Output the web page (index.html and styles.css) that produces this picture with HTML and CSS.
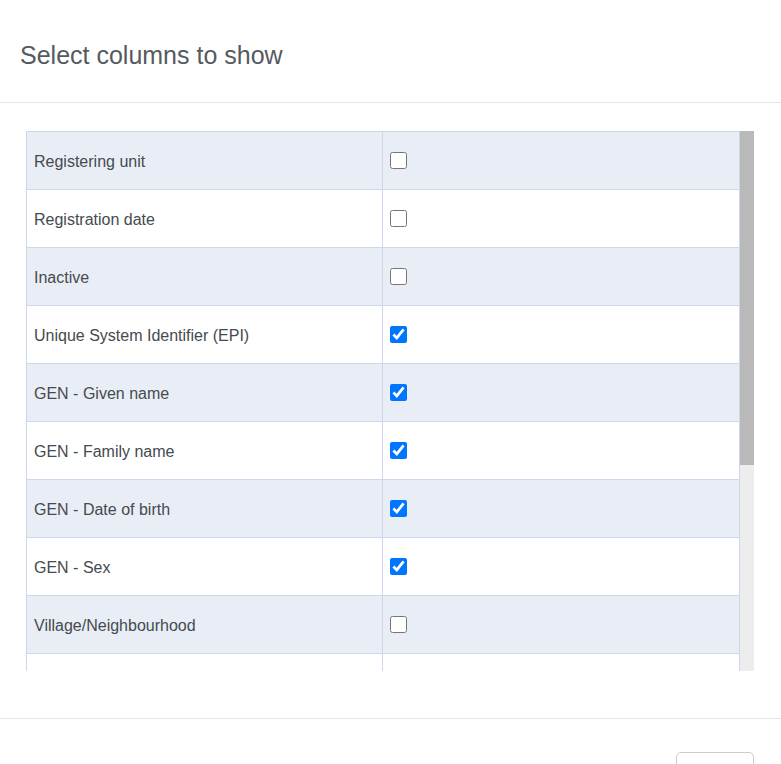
FILE: index.html
```html
<!DOCTYPE html>
<html lang="en">
<head>
<meta charset="utf-8">
<title>Select columns to show</title>
<link rel="stylesheet" href="styles.css">
</head>
<body>
<div class="modal">
  <div class="modal-header">
    <h2 class="modal-title">Select columns to show</h2>
  </div>
  <div class="modal-body">
    <div class="scroll-area">
      <div class="scroll-content">
        <table class="column-table">
          <tbody>
            <tr><td class="name">Registering unit</td><td class="check"><input type="checkbox"></td></tr>
            <tr><td class="name">Registration date</td><td class="check"><input type="checkbox"></td></tr>
            <tr><td class="name">Inactive</td><td class="check"><input type="checkbox"></td></tr>
            <tr><td class="name">Unique System Identifier (EPI)</td><td class="check"><input type="checkbox" checked></td></tr>
            <tr><td class="name">GEN - Given name</td><td class="check"><input type="checkbox" checked></td></tr>
            <tr><td class="name">GEN - Family name</td><td class="check"><input type="checkbox" checked></td></tr>
            <tr><td class="name">GEN - Date of birth</td><td class="check"><input type="checkbox" checked></td></tr>
            <tr><td class="name">GEN - Sex</td><td class="check"><input type="checkbox" checked></td></tr>
            <tr><td class="name">Village/Neighbourhood</td><td class="check"><input type="checkbox"></td></tr>
            <tr><td class="name">Phone number</td><td class="check"><input type="checkbox"></td></tr>
            <tr><td class="name">Address</td><td class="check"><input type="checkbox"></td></tr>
            <tr><td class="name">Mother's name</td><td class="check"><input type="checkbox"></td></tr>
            <tr><td class="name">Father's name</td><td class="check"><input type="checkbox"></td></tr>
            <tr><td class="name">Health facility</td><td class="check"><input type="checkbox"></td></tr>
            <tr><td class="name">Enrollment date</td><td class="check"><input type="checkbox"></td></tr>
          </tbody>
        </table>
      </div>
      <div class="scrollbar"><div class="scrollbar-thumb"></div></div>
    </div>
  </div>
  <div class="modal-footer">
    <button class="btn" type="button">Close</button>
  </div>
</div>
</body>
</html>
```

FILE: styles.css
```css
html, body {
  margin: 0;
  padding: 0;
  background: #ffffff;
  font-family: "Liberation Sans", Arial, sans-serif;
}

.modal {
  width: 781px;
  height: 764px;
  overflow: hidden;
}

.modal-header {
  height: 103px;
  padding: 9px 20px 0;
  display: flex;
  align-items: center;
  border-bottom: 1px solid #e5e5e5;
  box-sizing: border-box;
}

.modal-title {
  margin: 0;
  font-size: 25px;
  font-weight: 400;
  color: #555a5f;
}

.modal-body {
  padding: 28px 27px 47px 26px;
}

/* list viewport with its own scrollbar rail */
.scroll-area {
  height: 540px;
  display: flex;
}

.scroll-content {
  flex: 1;
  overflow: hidden;
}

.scrollbar {
  width: 14px;
  background: #ededed;
  flex-shrink: 0;
}

.scrollbar-thumb {
  height: 334px;
  background: #b9b9b9;
}

.column-table {
  width: 100%;
  border-collapse: collapse;
  font-size: 16px;
  color: #464a4e;
}

.column-table td {
  height: 58px;
  border: 1px solid #ccd8ea;
  padding: 0 7px;
  box-sizing: border-box;
}

.column-table td.name {
  width: 356px;
  padding-top: 2px;
}

.column-table tr:nth-child(odd) td {
  background: #e9eef6;
}

.column-table input[type="checkbox"] {
  width: 17px;
  height: 17px;
  margin: 0;
  display: block;
}

.modal-footer {
  border-top: 1px solid #e5e5e5;
  padding: 33px 27px 0;
  display: flex;
  justify-content: flex-end;
  align-items: flex-start;
}

.btn {
  width: 78px;
  height: 38px;
  padding: 14px 0 0;
  border: 1px solid #cccccc;
  border-radius: 5px;
  background: #ffffff;
  font-family: inherit;
  font-size: 16px;
  color: #333333;
}
```
